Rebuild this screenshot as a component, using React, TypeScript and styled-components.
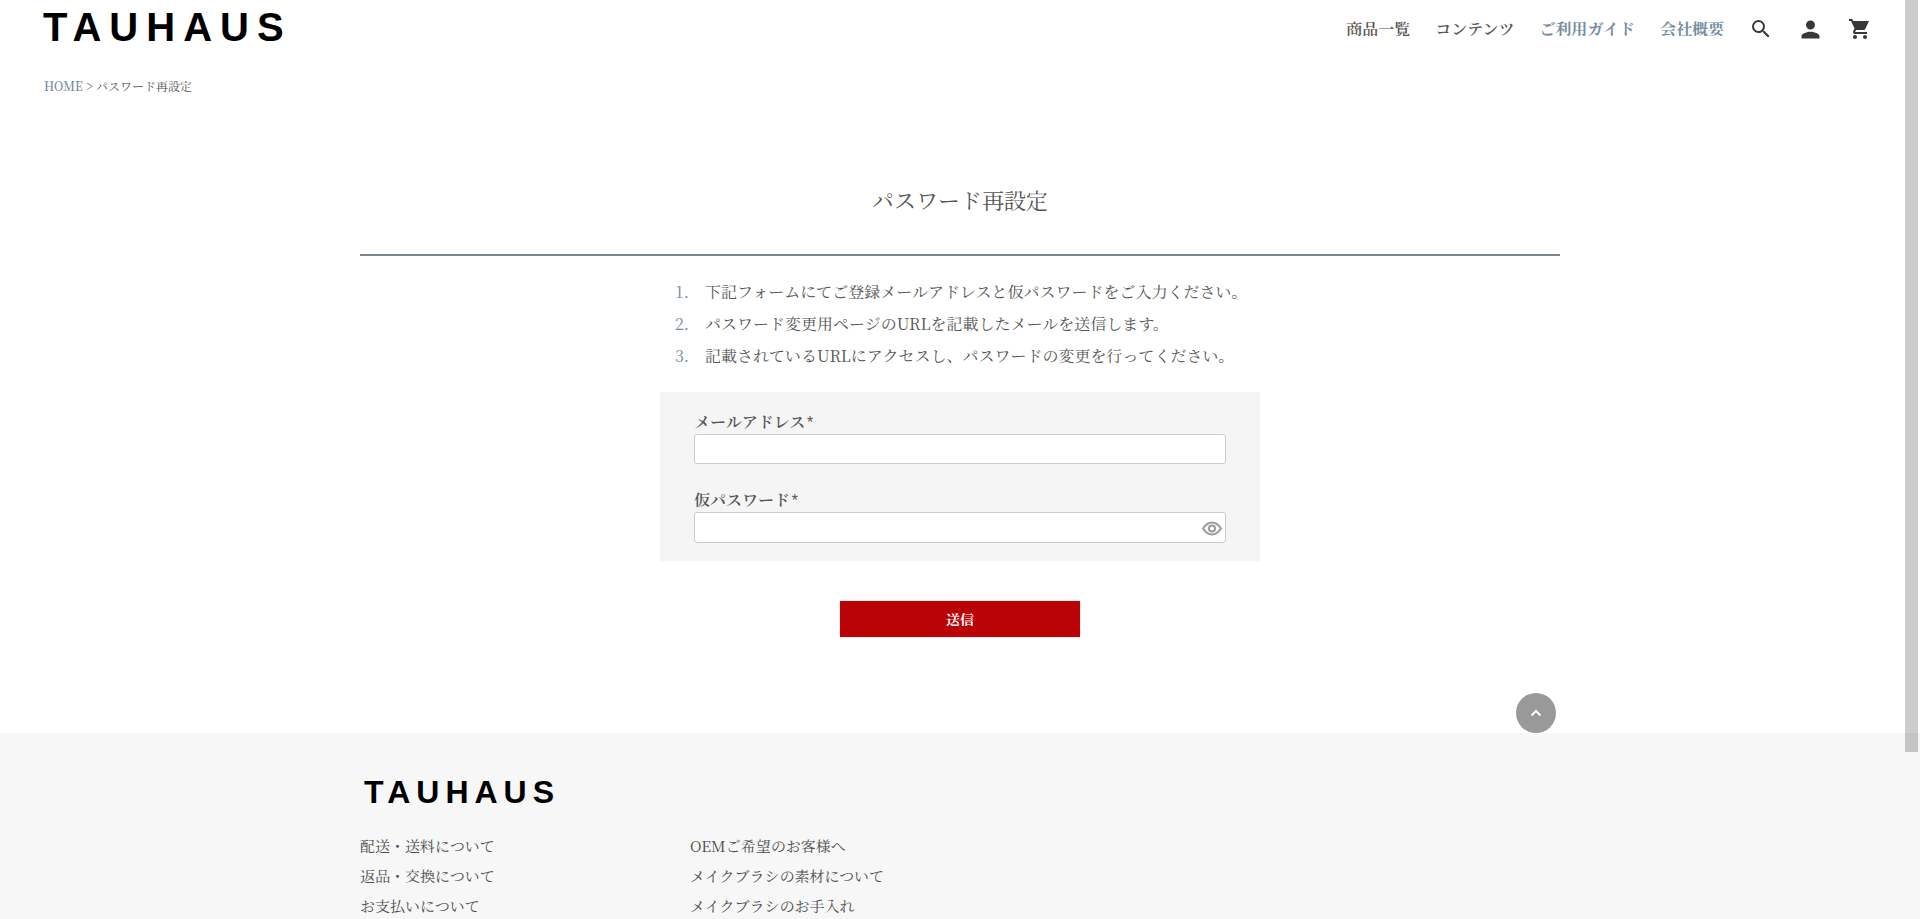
import React from 'react';
import styled, { createGlobalStyle } from 'styled-components';

const GlobalStyle = createGlobalStyle`
  *, *::before, *::after { box-sizing: border-box; }
  html { scrollbar-width: none; }
  body {
    margin: 0;
    background: #fff;
    color: #555;
    font: 400 16px/32px "Noto Serif JP", "Noto Serif CJK JP", "Liberation Serif", "Noto Sans CJK JP", serif;
  }
  a { color: inherit; text-decoration: none; }
  button, input { font: inherit; }
`;

const Page = styled.div`
  position: relative;
  display: flex;
  flex-direction: column;
  min-height: 100vh;
`;

const Header = styled.header`
  display: flex;
  align-items: flex-start;
  justify-content: space-between;
  padding: 0 48px 0 43px;
`;

const Logo = styled.a<{ $small?: boolean }>`
  display: block;
  color: #000;
  font-family: "Liberation Sans", sans-serif;
  font-weight: 700;
  font-size: ${(p) => (p.$small ? 32 : 40)}px;
  line-height: ${(p) => (p.$small ? 36 : 54)}px;
  letter-spacing: ${(p) => (p.$small ? 6 : 8)}px;
`;

const Nav = styled.nav`
  display: flex;
  align-items: center;
  gap: 25px;
  height: 58px;
`;

const NavLink = styled.a<{ $accent?: boolean }>`
  color: ${(p) => (p.$accent ? '#778da2' : '#555')};
  font-weight: ${(p) => (p.$accent ? 700 : 600)};
`;

const Icons = styled.div`
  display: flex;
  align-items: center;
  gap: 24px;
  color: #383838;

  a { display: flex; }
`;

const Breadcrumb = styled.nav`
  padding: 16px 44px 0;
  font-size: 12px;
  line-height: 24px;

  a {
    color: #708599;
    font-weight: 500;
  }
`;

const Main = styled.main`
  width: 100%;
  max-width: 1200px;
  margin: 0 auto;
`;

const Title = styled.h1`
  margin: 80px 0 16px;
  padding-bottom: 32px;
  border-bottom: 2px solid #7b8790;
  text-align: center;
  font-weight: 400;
  font-size: 22px;
  line-height: 44px;
`;

const Steps = styled.ol`
  width: 100%;
  max-width: 600px;
  margin: 20px auto 20px;
  padding: 0 0 0 15px;
  list-style: none;
  counter-reset: step;
`;

const Step = styled.li`
  display: flex;
  counter-increment: step;

  &::before {
    content: counter(step) ".";
    width: 30px;
    color: #778899;
  }
`;

const FormArea = styled.form`
  display: flex;
  flex-direction: column;
  align-items: center;
  gap: 40px;
`;

const Panel = styled.div`
  display: flex;
  flex-direction: column;
  gap: 24px;
  width: 100%;
  max-width: 600px;
  padding: 18px 34px;
  background: #f5f5f5;
`;

const Label = styled.label`
  display: block;
  font-weight: 600;
  line-height: 24px;
`;

const Required = styled.span`
  font-family: "Liberation Mono", monospace;
  font-weight: 400;
  line-height: 16px;
`;

const InputWrap = styled.div`
  position: relative;
`;

const Input = styled.input<{ $tall?: boolean }>`
  display: block;
  width: 100%;
  height: ${(p) => (p.$tall ? 31 : 30)}px;
  padding: 4px 8px;
  border: 1px solid #ccc;
  border-radius: 3px;
  background: #fff;
`;

const RevealButton = styled.button`
  position: absolute;
  top: 6px;
  right: 4px;
  display: flex;
  padding: 0;
  border: 0;
  background: none;
  color: #999;
`;

const Submit = styled.button`
  width: 240px;
  height: 36px;
  padding: 0;
  border: 0;
  background: #ba0306;
  box-shadow: 0 0 2px rgba(0, 0, 0, 0.2);
  color: #fff;
  font-weight: 700;
  font-size: 14px;
  line-height: 36px;
`;

const TopLink = styled.a`
  display: flex;
  align-items: center;
  justify-content: center;
  width: 40px;
  height: 40px;
  margin: 56px 4px 0 auto;
  border-radius: 50%;
  background: #999;
  color: #fff;
`;

const Footer = styled.footer`
  flex: 1;
  background: #f7f7f7;
`;

const FooterInner = styled.div`
  max-width: 1200px;
  margin: 0 auto;
  padding-top: 41px;
`;

const FooterColumns = styled.div`
  display: flex;
  margin-top: 21px;
`;

const FooterList = styled.ul`
  width: 330px;
  margin: 0;
  padding: 0;
  list-style: none;
  color: #4c4c4c;
  font-size: 15px;
  line-height: 30px;
`;

const LogoRow = styled.div`
  padding-left: 4px;
`;

const ScrollThumb = styled.div`
  position: absolute;
  top: 0;
  right: 2px;
  width: 13px;
  height: 752px;
  background: rgba(0, 0, 0, 0.2);
`;

const steps = [
  '下記フォームにてご登録メールアドレスと仮パスワードをご入力ください。',
  'パスワード変更用ページのURLを記載したメールを送信します。',
  '記載されているURLにアクセスし、パスワードの変更を行ってください。',
];

const footerColumns = [
  ['配送・送料について', '返品・交換について', 'お支払いについて'],
  ['OEMご希望のお客様へ', 'メイクブラシの素材について', 'メイクブラシのお手入れ'],
];

const SearchIcon = () => (
  <svg width="24" height="24" viewBox="0 0 24 24" fill="currentColor" aria-hidden="true">
    <path d="M15.5 14h-.79l-.28-.27A6.47 6.47 0 0 0 16 9.500 6.500 6.500 0 1 0 9.500 16c1.610 0 3.090-.59 4.230-1.570l.27.28v.79l5 4.990L20.490 19l-4.990-5zm-6 0C7.010 14 5 11.990 5 9.500S7.010 5 9.500 5 14 7.010 14 9.500 11.990 14 9.500 14z" />
  </svg>
);

const PersonIcon = () => (
  <svg width="27" height="27" viewBox="0 0 24 24" fill="currentColor" aria-hidden="true">
    <path d="M12 12c2.210 0 4-1.790 4-4s-1.790-4-4-4-4 1.790-4 4 1.790 4 4 4zm0 2c-2.670 0-8 1.340-8 4v2h16v-2c0-2.660-5.330-4-8-4z" />
  </svg>
);

const CartIcon = () => (
  <svg width="24" height="24" viewBox="0 0 24 24" fill="currentColor" aria-hidden="true">
    <path d="M7 18c-1.100 0-1.990.9-1.990 2S5.900 22 7 22s2-.9 2-2-.9-2-2-2zM1 2v2h2l3.600 7.590-1.350 2.450c-.16.28-.25.610-.25.960 0 1.100.9 2 2 2h12v-2H7.420c-.14 0-.25-.11-.25-.25l.03-.12.900-1.630h7.450c.750 0 1.410-.41 1.750-1.030L21 4H5.210l-.94-2H1zm16 16c-1.100 0-1.990.9-1.990 2s.890 2 1.990 2 2-.9 2-2-.9-2-2-2z" />
  </svg>
);

const EyeIcon = () => (
  <svg width="20" height="20" viewBox="0 0 20 20" fill="none" stroke="currentColor" strokeWidth="2" aria-hidden="true">
    <path d="M1 10.500Q5 4.500 10 4.500T19 10.500Q15 16.500 10 16.500T1 10.500Z" strokeLinejoin="round" />
    <circle cx="10" cy="10.500" r="3" />
  </svg>
);

const ChevronUp = () => (
  <svg width="12" height="12" viewBox="0 0 12 12" fill="none" stroke="currentColor" strokeWidth="2" aria-hidden="true">
    <path d="M1.500 8.500 6 4l4.500 4.500" />
  </svg>
);

export default function App() {
  return (
    <Page id="top">
      <GlobalStyle />
      <Header>
        <Logo href="#">TAUHAUS</Logo>
        <Nav>
          <NavLink href="#">商品一覧</NavLink>
          <NavLink href="#">コンテンツ</NavLink>
          <NavLink href="#" $accent>ご利用ガイド</NavLink>
          <NavLink href="#" $accent>会社概要</NavLink>
          <Icons>
            <a href="#" aria-label="検索"><SearchIcon /></a>
            <a href="#" aria-label="マイページ"><PersonIcon /></a>
            <a href="#" aria-label="カート"><CartIcon /></a>
          </Icons>
        </Nav>
      </Header>
      <Breadcrumb aria-label="パンくず">
        <a href="#">HOME</a> &gt; パスワード再設定
      </Breadcrumb>

      <Main>
        <Title>パスワード再設定</Title>
        <Steps>
          {steps.map((text) => (
            <Step key={text}>{text}</Step>
          ))}
        </Steps>
        <FormArea onSubmit={(e) => e.preventDefault()}>
          <Panel>
            <div>
              <Label htmlFor="email">メールアドレス<Required>*</Required></Label>
              <Input id="email" type="email" />
            </div>
            <div>
              <Label htmlFor="password">仮パスワード<Required>*</Required></Label>
              <InputWrap>
                <Input id="password" type="password" $tall />
                <RevealButton type="button" aria-label="パスワードを表示">
                  <EyeIcon />
                </RevealButton>
              </InputWrap>
            </div>
          </Panel>
          <Submit type="submit">送信</Submit>
        </FormArea>
        <TopLink href="#top" aria-label="ページの先頭へ">
          <ChevronUp />
        </TopLink>
      </Main>

      <Footer>
        <FooterInner>
          <LogoRow>
            <Logo href="#" $small>TAUHAUS</Logo>
          </LogoRow>
          <FooterColumns>
            {footerColumns.map((items) => (
              <FooterList key={items[0]}>
                {items.map((item) => (
                  <li key={item}><a href="#">{item}</a></li>
                ))}
              </FooterList>
            ))}
          </FooterColumns>
        </FooterInner>
      </Footer>
      <ScrollThumb />
    </Page>
  );
}
